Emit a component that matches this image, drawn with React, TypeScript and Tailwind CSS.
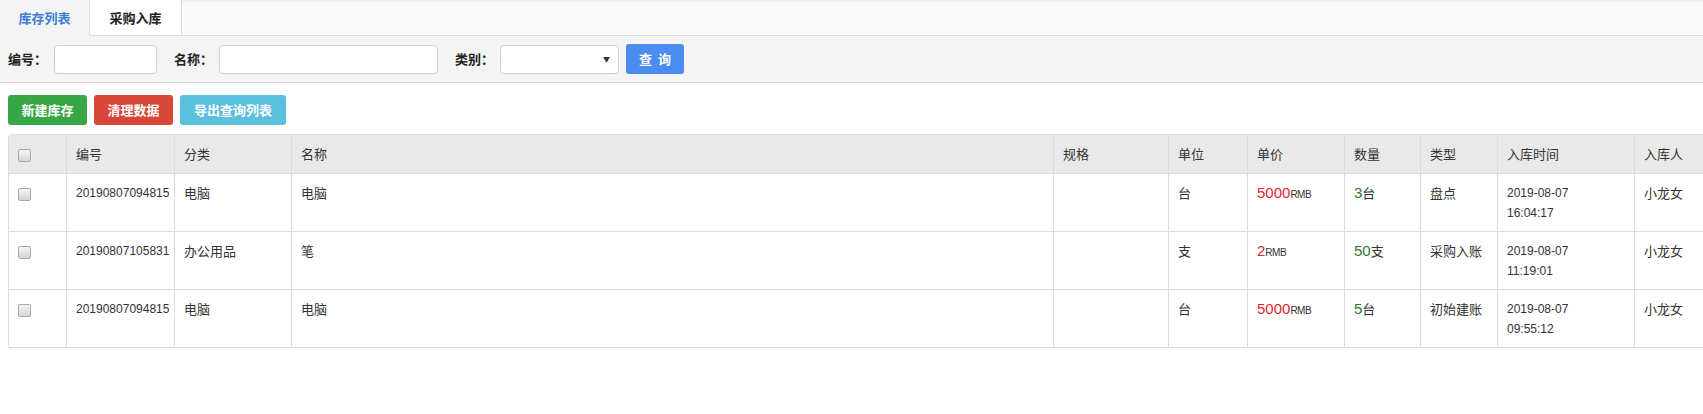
import React from 'react';

interface StockRow {
  id: string;
  category: string;
  name: string;
  spec: string;
  unit: string;
  price: number;
  qty: number;
  type: string;
  date: string;
  time: string;
  operator: string;
}

const rows: StockRow[] = [
  { id: '20190807094815', category: '电脑', name: '电脑', spec: '', unit: '台', price: 5000, qty: 3, type: '盘点', date: '2019-08-07', time: '16:04:17', operator: '小龙女' },
  { id: '20190807105831', category: '办公用品', name: '笔', spec: '', unit: '支', price: 2, qty: 50, type: '采购入账', date: '2019-08-07', time: '11:19:01', operator: '小龙女' },
  { id: '20190807094815', category: '电脑', name: '电脑', spec: '', unit: '台', price: 5000, qty: 5, type: '初始建账', date: '2019-08-07', time: '09:55:12', operator: '小龙女' },
];

const Checkbox = () => (
  <span className="inline-block w-[13px] h-[13px] rounded-[2px] border border-[#a9a9a9] bg-gradient-to-b from-[#f4f4f4] to-[#d6d6d6] align-middle" />
);

const cell = 'pl-[9px] pt-[9px] border-l border-b border-[#dcdcdc] leading-[20px]';

const App = () => {
  return (
    <div className="w-[1703px] h-[414px] overflow-hidden bg-white text-[#333] font-['Noto_Sans_CJK_SC',sans-serif] text-[13px]">
      {/* tabs */}
      <div className="h-[36px] flex bg-[#fafafa] border-b border-[#dcdcdc] shadow-[inset_0_3px_3px_-2px_rgba(0,0,0,0.08)]">
        <div className="w-[90px] h-[36px] -mb-px flex items-center justify-center bg-[#f4f4f4] border-r border-[#dcdcdc] text-[#3a7ed6] font-bold">
          库存列表
        </div>
        <div className="w-[92px] flex items-center justify-center bg-white border-r border-[#dcdcdc] font-bold text-[#222]">
          采购入库
        </div>
      </div>

      {/* filter bar */}
      <div className="h-[47px] flex items-center bg-[#f4f4f4] border-b border-[#dcdcdc] pl-[8px]">
        <span className="font-bold text-[#222] w-[46px]">编号：</span>
        <input className="w-[103px] h-[29px] bg-white border border-[#cfcfcf] rounded-[4px] outline-none" />
        <span className="font-bold text-[#222] ml-[17px] w-[45px]">名称：</span>
        <input className="w-[219px] h-[29px] bg-white border border-[#cfcfcf] rounded-[4px] outline-none" />
        <span className="font-bold text-[#222] ml-[17px] w-[45px]">类别：</span>
        <div className="w-[119px] h-[29px] bg-white border border-[#cfcfcf] rounded-[4px] flex items-center justify-end pr-[8px]">
          <span className="text-[7px] text-[#333]">▼</span>
        </div>
        <button className="ml-[7px] w-[58px] h-[30px] rounded-[3px] bg-[#4a8cf0] text-white font-bold tracking-[6px] pl-[6px]">
          查询
        </button>
      </div>

      {/* actions */}
      <div className="flex gap-[7px] pl-[8px] pt-[12px]">
        <button className="w-[79px] h-[30px] rounded-[3px] bg-[#38a846] text-white font-bold">新建库存</button>
        <button className="w-[79px] h-[30px] rounded-[3px] bg-[#d9473a] text-white font-bold">清理数据</button>
        <button className="w-[106px] h-[30px] rounded-[3px] bg-[#5bc0de] text-white font-bold">导出查询列表</button>
      </div>

      {/* table */}
      <div className="pl-[8px] pt-[9px]">
        <table className="table-fixed border-separate border-spacing-0 w-[1800px] border-l border-t border-[#dcdcdc] rounded-tl-[4px] rounded-bl-[4px]">
          <colgroup>
            <col className="w-[57px]" />
            <col className="w-[108px]" />
            <col className="w-[117px]" />
            <col className="w-[762px]" />
            <col className="w-[115px]" />
            <col className="w-[79px]" />
            <col className="w-[97px]" />
            <col className="w-[76px]" />
            <col className="w-[77px]" />
            <col className="w-[137px]" />
            <col />
          </colgroup>
          <thead>
            <tr className="bg-[#e9e9e9] h-[39px]">
              <th className="text-left font-normal pl-[9px] border-b border-[#dcdcdc]"><Checkbox /></th>
              {['编号', '分类', '名称', '规格', '单位', '单价', '数量', '类型', '入库时间', '入库人'].map((h) => (
                <th key={h} className="text-left font-normal pl-[9px] border-l border-b border-[#dcdcdc] text-[#333]">
                  {h}
                </th>
              ))}
            </tr>
          </thead>
          <tbody>
            {rows.map((r, i) => (
              <tr key={i} className="align-top">
                <td className="pl-[9px] pt-[9px] border-b border-[#dcdcdc] leading-[20px]"><Checkbox /></td>
                <td className={`${cell} text-[12px] font-['Liberation_Sans',sans-serif]`}>{r.id}</td>
                <td className={cell}>{r.category}</td>
                <td className={cell}>{r.name}</td>
                <td className={cell}>{r.spec}</td>
                <td className={cell}>{r.unit}</td>
                <td className={`${cell} whitespace-nowrap`}>
                  <span className="text-[#e3262e] text-[15px] font-['Liberation_Sans',sans-serif]">{r.price}</span>
                  <span className="text-[10px] font-['Liberation_Sans',sans-serif] tracking-[-0.5px]">RMB</span>
                </td>
                <td className={`${cell} whitespace-nowrap`}>
                  <span className="text-[#2e7a36] text-[15px] font-['Liberation_Sans',sans-serif]">{r.qty}</span>
                  <span>{r.unit}</span>
                </td>
                <td className={cell}>{r.type}</td>
                <td className={`${cell} pb-[8px] text-[12px] font-['Liberation_Sans',sans-serif]`}>
                  <div>{r.date}</div>
                  <div>{r.time}</div>
                </td>
                <td className={cell}>{r.operator}</td>
              </tr>
            ))}
          </tbody>
        </table>
      </div>
    </div>
  );
};

export default App;
